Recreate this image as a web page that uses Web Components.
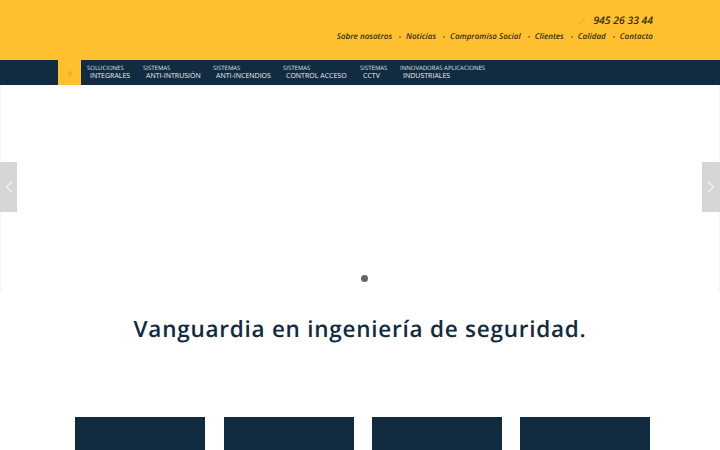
<!DOCTYPE html>
<html lang="es">
<head>
<meta charset="utf-8">
<title>Vanguardia en ingeniería de seguridad</title>
<style>
    html, body { margin: 0; padding: 0; background: #fff; overflow: hidden; height: 450px; }
    body { font-family: 'Open Sans', 'Liberation Sans', sans-serif; text-rendering: geometricPrecision; }
</style>
</head>
<body>
<top-bar phone="945 26 33 44">
    <a>Sobre nosotros</a>
    <a>Noticias</a>
    <a>Compromiso Social</a>
    <a>Clientes</a>
    <a>Calidad</a>
    <a>Contacto</a>
</top-bar>
<main-nav>
    <nav-item small="SOLUCIONES" big="INTEGRALES" style="width:56px"></nav-item>
    <nav-item small="SISTEMAS" big="ANTI-INTRUSIÓN" style="width:70px"></nav-item>
    <nav-item small="SISTEMAS" big="ANTI-INCENDIOS" style="width:70px"></nav-item>
    <nav-item small="SISTEMAS" big="CONTROL ACCESO" style="width:77px"></nav-item>
    <nav-item small="SISTEMAS" big="CCTV" style="width:40px"></nav-item>
    <nav-item small="INNOVADORAS APLICACIONES" big="INDUSTRIALES"></nav-item>
</main-nav>
<hero-slider></hero-slider>
<section-title>Vanguardia en ingeniería de seguridad.</section-title>
<card-row>
    <dark-card></dark-card>
    <dark-card></dark-card>
    <dark-card></dark-card>
    <dark-card></dark-card>
</card-row>

<script>
class TopBar extends HTMLElement {
    constructor() {
        super();
        this.attachShadow({ mode: 'open' });
        this.shadowRoot.innerHTML = `
            <style>
                :host {
                    display: flex;
                    flex-direction: column;
                    align-items: flex-end;
                    box-sizing: border-box;
                    height: 60px;
                    padding: 13.5px 67px 0 0;
                    background: #fec02f;
                    color: #332c14;
                    font-style: italic;
                    font-weight: 600;
                }
                .phone {
                    display: flex;
                    align-items: center;
                    gap: 8px;
                    font-size: 10.4px;
                    line-height: 14px;
                }
                .links {
                    display: flex;
                    margin-top: 3px;
                    font-size: 8.05px;
                    line-height: 12px;
                }
                ::slotted(a) { display: block; }
            </style>
            <div class="phone">
                <svg width="7" height="7" viewBox="0 0 7 7"><path d="M6.5 .8C6 4 4 6 .8 6.5" fill="none" stroke="#f0b021" stroke-width="1.4"/></svg>
                <span></span>
            </div>
            <div class="links"><slot></slot></div>
        `;
        this.shadowRoot.querySelector('span').textContent = this.getAttribute('phone');
    }

    connectedCallback() {
        // little dots between the links
        const links = [...this.children];
        links.slice(1).forEach(a => {
            a.style.cssText = "margin-left:7px;padding-left:7px;background:radial-gradient(circle,#8a7020 .6px,transparent .9px) 0 50%/2px 2px no-repeat";
        });
    }
}

class MainNav extends HTMLElement {
    constructor() {
        super();
        this.attachShadow({ mode: 'open' });
        this.shadowRoot.innerHTML = `
            <style>
                :host {
                    display: flex;
                    box-sizing: border-box;
                    height: 25px;
                    padding-left: 58px;
                    background: #112b41;
                }
                .home {
                    display: flex;
                    align-items: center;
                    justify-content: center;
                    width: 23px;
                    margin-right: 6px;
                    background: #fec02f;
                }
            </style>
            <div class="home">
                <svg width="6" height="6" viewBox="0 0 6 6"><path d="M3 .5 .4 3H1.2V5.5H4.8V3H5.6Z" fill="#f0ae22"/></svg>
            </div>
            <slot></slot>
        `;
    }
}

class NavItem extends HTMLElement {
    constructor() {
        super();
        this.attachShadow({ mode: 'open' });
        this.shadowRoot.innerHTML = `
            <style>
                :host {
                    display: block;
                    box-sizing: border-box;
                    padding-top: 4.2px;
                    color: #fff;
                    white-space: nowrap;
                }
                .small { font-size: 6px; line-height: 8.2px; color: #dfe3e6; }
                .big { font-size: 7px; line-height: 9.5px; padding-left: 3px; color: #eef0f2; }
            </style>
            <div class="small"></div>
            <div class="big"></div>
        `;
        this.shadowRoot.querySelector('.small').textContent = this.getAttribute('small');
        this.shadowRoot.querySelector('.big').textContent = this.getAttribute('big');
    }
}

class HeroSlider extends HTMLElement {
    constructor() {
        super();
        this.attachShadow({ mode: 'open' });
        this.shadowRoot.innerHTML = `
            <style>
                :host {
                    display: flex;
                    justify-content: space-between;
                    align-items: flex-start;
                    position: relative;
                    box-sizing: border-box;
                    height: 207px;
                    padding-top: 77px;
                    border-left: 1px solid #f4f4f4;
                    border-right: 1px solid #f4f4f4;
                }
                .arrow {
                    display: flex;
                    align-items: center;
                    justify-content: center;
                    width: 17px;
                    height: 50px;
                    background: #d6d6d6;
                }
                .prev { margin-left: -1px; }
                .next { margin-right: -1px; width: 18px; }
                .dot {
                    position: absolute;
                    left: 359.5px;
                    top: 189.5px;
                    width: 7px;
                    height: 7px;
                    border-radius: 50%;
                    background: #666;
                }
            </style>
            <div class="arrow prev"><svg width="8" height="12" viewBox="0 0 8 12"><path d="M7 .8 1.5 6 7 11.2" fill="none" stroke="#f2f2f2" stroke-width="1.3"/></svg></div>
            <div class="arrow next"><svg width="8" height="12" viewBox="0 0 8 12"><path d="M1 .8 6.5 6 1 11.2" fill="none" stroke="#f2f2f2" stroke-width="1.3"/></svg></div>
            <div class="dot"></div>
        `;
    }
}

class SectionTitle extends HTMLElement {
    constructor() {
        super();
        this.attachShadow({ mode: 'open' });
        this.shadowRoot.innerHTML = `
            <style>
                :host {
                    display: block;
                    height: 125px;
                    padding-top: 21px;
                    box-sizing: border-box;
                    text-align: center;
                    color: #112b41;
                    font-size: 22.5px;
                    line-height: 32px;
                    font-weight: 600;
                    letter-spacing: 0.75px;
                }
            </style>
            <slot></slot>
        `;
    }
}

class CardRow extends HTMLElement {
    constructor() {
        super();
        this.attachShadow({ mode: 'open' });
        this.shadowRoot.innerHTML = `
            <style>
                :host {
                    display: grid;
                    grid-template-columns: repeat(4, 130px);
                    column-gap: 18.33px;
                    padding-left: 75.4px;
                }
            </style>
            <slot></slot>
        `;
    }
}

class DarkCard extends HTMLElement {
    constructor() {
        super();
        this.attachShadow({ mode: 'open' });
        this.shadowRoot.innerHTML = `
            <style>
                :host { display: block; height: 33px; background: #112b41; }
            </style>
        `;
    }
}

customElements.define('top-bar', TopBar);
customElements.define('main-nav', MainNav);
customElements.define('nav-item', NavItem);
customElements.define('hero-slider', HeroSlider);
customElements.define('section-title', SectionTitle);
customElements.define('card-row', CardRow);
customElements.define('dark-card', DarkCard);
</script>
</body>
</html>
